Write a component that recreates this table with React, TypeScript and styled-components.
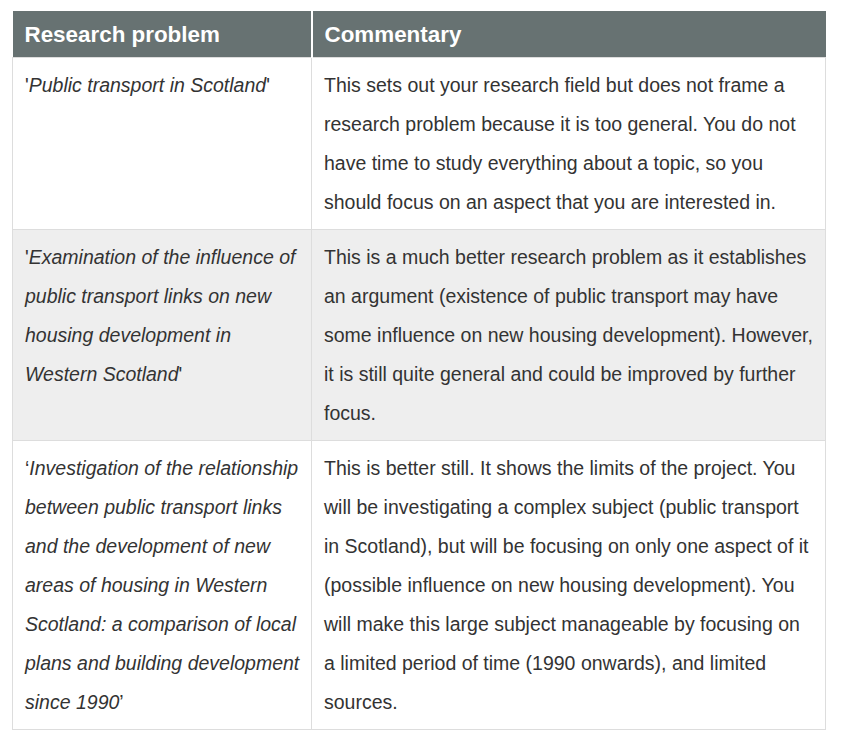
import React from "react";
import styled, { createGlobalStyle } from "styled-components";

const GlobalStyle = createGlobalStyle`
  body {
    margin: 0;
    background: #fff;
    font-family: "Liberation Sans", Arial, sans-serif;
  }
`;

const Page = styled.div`
  padding: 11px 12px;
`;

const Table = styled.table`
  width: 813px;
  border-collapse: collapse;
  table-layout: fixed;
  color: #333;
  font-size: 19.5px;
`;

const Col = styled.col<{ width: number }>`
  width: ${({ width }) => width}px;
`;

const HeadCell = styled.th<{ divided?: boolean }>`
  background: #677272;
  color: #fff;
  font-size: 22.4px;
  font-weight: bold;
  text-align: left;
  line-height: 30px;
  padding: 9px 11px 7px 12px;
  border-left: ${({ divided }) => (divided ? "2px solid #fff" : "none")};
`;

const Row = styled.tr<{ shaded?: boolean }>`
  background: ${({ shaded }) => (shaded ? "#eeeeee" : "#fff")};
`;

const Cell = styled.td`
  vertical-align: top;
  line-height: 39px;
  padding: 8px 11px 7px 12px;
  border: 1px solid #dddddd;
`;

const Problem = styled.em`
  font-style: italic;
`;

type Item = {
  open: string;
  problem: string;
  close: string;
  commentary: string;
};

const items: Item[] = [
  {
    open: "'",
    problem: "Public transport in Scotland",
    close: "'",
    commentary:
      "This sets out your research field but does not frame a research problem because it is too general. You do not have time to study everything about a topic, so you should focus on an aspect that you are interested in.",
  },
  {
    open: "'",
    problem:
      "Examination of the influence of public transport links on new housing development in Western Scotland",
    close: "'",
    commentary:
      "This is a much better research problem as it establishes an argument (existence of public transport may have some influence on new housing development). However, it is still quite general and could be improved by further focus.",
  },
  {
    open: "\u2018",
    problem:
      "Investigation of the relationship between public transport links and the development of new areas of housing in Western Scotland: a comparison of local plans and building development since 1990",
    close: "\u2019",
    commentary:
      "This is better still. It shows the limits of the project. You will be investigating a complex subject (public transport in Scotland), but will be focusing on only one aspect of it (possible influence on new housing development). You will make this large subject manageable by focusing on a limited period of time (1990 onwards), and limited sources.",
  },
];

function App() {
  return (
    <Page>
      <GlobalStyle />
      <Table>
        <colgroup>
          <Col width={299} />
          <Col width={514} />
        </colgroup>
        <thead>
          <tr>
            <HeadCell>Research problem</HeadCell>
            <HeadCell divided>Commentary</HeadCell>
          </tr>
        </thead>
        <tbody>
          {items.map((item, index) => (
            <Row key={index} shaded={index === 1}>
              <Cell>
                {item.open}
                <Problem>{item.problem}</Problem>
                {item.close}
              </Cell>
              <Cell>{item.commentary}</Cell>
            </Row>
          ))}
        </tbody>
      </Table>
    </Page>
  );
}

export default App;
